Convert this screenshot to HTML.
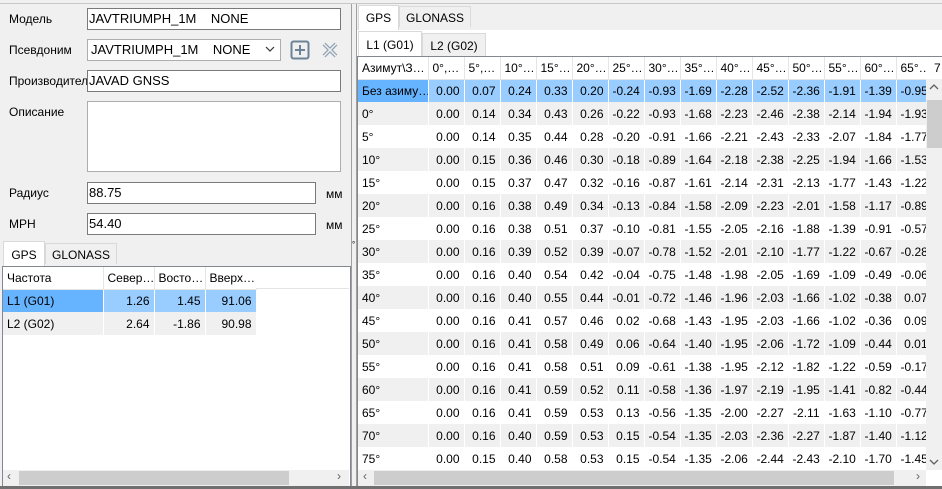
<!DOCTYPE html>
<html><head><meta charset="utf-8"><style>
*{box-sizing:border-box;margin:0;padding:0}
body{width:942px;height:489px;overflow:hidden;background:#f0f0f0;font-family:"Liberation Sans","DejaVu Sans",sans-serif;font-size:12px;color:#000;position:relative}
.a{position:absolute}
.inp{position:absolute;background:#fff;border:1px solid #7a7a7a;padding:2px 1px;font-size:13px;line-height:15px;white-space:pre}
.lbl{position:absolute;font-size:12px}
.tab{position:absolute;height:21px;border:1px solid #d9d9d9;border-bottom:none;background:#f0f0f0;text-align:center;line-height:20px}
.tab.s{background:#fff}
table{border-collapse:collapse;table-layout:fixed}
td{height:23px;padding:0 4px;white-space:nowrap;overflow:hidden;border-right:1px solid #fff;text-align:right}
td:first-child{text-align:left}
th{height:22px;font-weight:normal;text-align:left;padding:0 4px;white-space:nowrap;overflow:hidden;border-right:1px solid #e5e5e5;border-bottom:1px solid #e5e5e5;background:#fff}
tr.g td{background:#f0f0f0}
tr.w td{background:#fff}
tr.b td{background:#99ccff}
tr.b td:first-child{background:#66b3ff}
</style></head><body>
<div class="a" style="left:0;top:3px;width:942px;height:1px;background:#c8c8c8"></div>
<!-- left panel -->
<div class="lbl" style="left:9px;top:12px">Модель</div>
<div class="inp" style="left:87px;top:8px;width:254px;height:22px">JAVTRIUMPH_1M    NONE</div>
<div class="lbl" style="left:9px;top:43px">Псевдоним</div>
<div class="inp" style="left:87px;top:39px;width:194px;height:22px;border-color:#adadad;padding-left:3px">JAVTRIUMPH_1M    NONE</div>
<svg class="a" style="left:264px;top:44px" width="12" height="10"><path d="M2 3l4 4 4-4" fill="none" stroke="#333" stroke-width="1.2"/></svg>
<svg class="a" style="left:290px;top:40px" width="20" height="20"><rect x="1.5" y="1.5" width="17" height="17" rx="2" fill="none" stroke="#6c8397" stroke-width="2"/><path d="M10 5v10M5 10h10" stroke="#6c8397" stroke-width="2"/></svg>
<svg class="a" style="left:321px;top:41px" width="18" height="18"><path d="M3 3L15 15M15 3L3 15" stroke="#8fa3b4" stroke-width="4"/><path d="M3 3L15 15M15 3L3 15" stroke="#f0f0f0" stroke-width="1.5"/></svg>
<div class="lbl" style="left:9px;top:74px">Производител</div>
<div class="inp" style="left:87px;top:70px;width:254px;height:22px">JAVAD GNSS</div>
<div class="lbl" style="left:9px;top:105px">Описание</div>
<div class="inp" style="left:87px;top:101px;width:254px;height:71px;border-color:#adadad"></div>
<div class="lbl" style="left:9px;top:186px">Радиус</div>
<div class="inp" style="left:87px;top:182px;width:229px;height:22px">88.75</div>
<div class="lbl" style="left:326px;top:187px">мм</div>
<div class="lbl" style="left:9px;top:217px">МРН</div>
<div class="inp" style="left:87px;top:213px;width:229px;height:22px">54.40</div>
<div class="lbl" style="left:326px;top:218px">мм</div>

<div class="tab s" style="left:3px;top:241px;width:42px;height:25px;line-height:26px">GPS</div>
<div class="tab" style="left:45px;top:243px;width:72px;line-height:22px">GLONASS</div>
<div class="a" style="left:2px;top:266px;width:349px;height:221px;background:#fff;border:1px solid #828790"></div>
<div class="a" style="left:3px;top:267px;width:346px;height:220px;overflow:hidden">
<table style="width:253px">
<colgroup><col style="width:100px"><col style="width:51px"><col style="width:51px"><col style="width:51px"></colgroup>
<tr><th>Частота</th><th>Север…</th><th>Восто…</th><th>Вверх…</th></tr>
<tr class="b"><td>L1 (G01)</td><td>1.26</td><td>1.45</td><td>91.06</td></tr>
<tr class="g"><td>L2 (G02)</td><td>2.64</td><td>-1.86</td><td>90.98</td></tr>
</table>
<div class="a" style="left:253px;top:0;width:93px;height:22px;border-bottom:1px solid #e5e5e5;background:#fff"></div>
</div>
<div class="a" style="left:3px;top:470px;width:346px;height:16px;background:#f0f0f0"></div>
<div class="a" style="left:19px;top:471px;width:270px;height:14px;background:#cdcdcd"></div>
<div class="a" style="left:7px;top:469px;color:#606060;font-size:12px">&lsaquo;</div>
<div class="a" style="left:337px;top:469px;color:#606060;font-size:12px">&rsaquo;</div>
<div class="a" style="left:351px;top:4px;width:1px;height:485px;background:#a0a0a0"></div>
<div class="a" style="left:352px;top:240px;font-size:8px">°</div>

<!-- right panel -->
<div class="a" style="left:356px;top:4px;width:1px;height:485px;background:#a0a0a0"></div>
<div class="tab s" style="left:358px;top:5px;width:41px;height:25px;line-height:24px">GPS</div>
<div class="tab" style="left:399px;top:6px;width:72px;line-height:22px">GLONASS</div>
<div class="a" style="left:357px;top:30px;width:585px;height:459px;background:#fff"></div>
<div class="tab s" style="left:358px;top:31px;width:64px;height:26px;line-height:26px">L1 (G01)</div>
<div class="tab" style="left:422px;top:33px;width:64px;height:23px;line-height:24px;border-color:#d9d9d9">L2 (G02)</div>
<div class="a" style="left:357px;top:56px;width:585px;height:1px;background:#828790"></div>
<div class="a" style="left:357px;top:56px;width:1px;height:433px;background:#828790"></div>
<div class="a" style="left:358px;top:57px;width:569px;height:413px;overflow:hidden">
<table style="width:610px">
<colgroup><col style="width:70px"><col span="15" style="width:36px"></colgroup>
<tr><th>Азимут\З…</th><th>0°,…</th><th>5°,…</th><th>10°…</th><th>15°…</th><th>20°…</th><th>25°…</th><th>30°…</th><th>35°…</th><th>40°…</th><th>45°…</th><th>50°…</th><th>55°…</th><th>60°…</th><th>65°…</th><th>70°…</th></tr>
<tr class="b"><td>Без азиму…</td><td>0.00</td><td>0.07</td><td>0.24</td><td>0.33</td><td>0.20</td><td>-0.24</td><td>-0.93</td><td>-1.69</td><td>-2.28</td><td>-2.52</td><td>-2.36</td><td>-1.91</td><td>-1.39</td><td>-0.95</td><td></td></tr>
<tr class="g"><td>0°</td><td>0.00</td><td>0.14</td><td>0.34</td><td>0.43</td><td>0.26</td><td>-0.22</td><td>-0.93</td><td>-1.68</td><td>-2.23</td><td>-2.46</td><td>-2.38</td><td>-2.14</td><td>-1.94</td><td>-1.93</td><td></td></tr>
<tr class="w"><td>5°</td><td>0.00</td><td>0.14</td><td>0.35</td><td>0.44</td><td>0.28</td><td>-0.20</td><td>-0.91</td><td>-1.66</td><td>-2.21</td><td>-2.43</td><td>-2.33</td><td>-2.07</td><td>-1.84</td><td>-1.77</td><td></td></tr>
<tr class="g"><td>10°</td><td>0.00</td><td>0.15</td><td>0.36</td><td>0.46</td><td>0.30</td><td>-0.18</td><td>-0.89</td><td>-1.64</td><td>-2.18</td><td>-2.38</td><td>-2.25</td><td>-1.94</td><td>-1.66</td><td>-1.53</td><td></td></tr>
<tr class="w"><td>15°</td><td>0.00</td><td>0.15</td><td>0.37</td><td>0.47</td><td>0.32</td><td>-0.16</td><td>-0.87</td><td>-1.61</td><td>-2.14</td><td>-2.31</td><td>-2.13</td><td>-1.77</td><td>-1.43</td><td>-1.22</td><td></td></tr>
<tr class="g"><td>20°</td><td>0.00</td><td>0.16</td><td>0.38</td><td>0.49</td><td>0.34</td><td>-0.13</td><td>-0.84</td><td>-1.58</td><td>-2.09</td><td>-2.23</td><td>-2.01</td><td>-1.58</td><td>-1.17</td><td>-0.89</td><td></td></tr>
<tr class="w"><td>25°</td><td>0.00</td><td>0.16</td><td>0.38</td><td>0.51</td><td>0.37</td><td>-0.10</td><td>-0.81</td><td>-1.55</td><td>-2.05</td><td>-2.16</td><td>-1.88</td><td>-1.39</td><td>-0.91</td><td>-0.57</td><td></td></tr>
<tr class="g"><td>30°</td><td>0.00</td><td>0.16</td><td>0.39</td><td>0.52</td><td>0.39</td><td>-0.07</td><td>-0.78</td><td>-1.52</td><td>-2.01</td><td>-2.10</td><td>-1.77</td><td>-1.22</td><td>-0.67</td><td>-0.28</td><td></td></tr>
<tr class="w"><td>35°</td><td>0.00</td><td>0.16</td><td>0.40</td><td>0.54</td><td>0.42</td><td>-0.04</td><td>-0.75</td><td>-1.48</td><td>-1.98</td><td>-2.05</td><td>-1.69</td><td>-1.09</td><td>-0.49</td><td>-0.06</td><td></td></tr>
<tr class="g"><td>40°</td><td>0.00</td><td>0.16</td><td>0.40</td><td>0.55</td><td>0.44</td><td>-0.01</td><td>-0.72</td><td>-1.46</td><td>-1.96</td><td>-2.03</td><td>-1.66</td><td>-1.02</td><td>-0.38</td><td>0.07</td><td></td></tr>
<tr class="w"><td>45°</td><td>0.00</td><td>0.16</td><td>0.41</td><td>0.57</td><td>0.46</td><td>0.02</td><td>-0.68</td><td>-1.43</td><td>-1.95</td><td>-2.03</td><td>-1.66</td><td>-1.02</td><td>-0.36</td><td>0.09</td><td></td></tr>
<tr class="g"><td>50°</td><td>0.00</td><td>0.16</td><td>0.41</td><td>0.58</td><td>0.49</td><td>0.06</td><td>-0.64</td><td>-1.40</td><td>-1.95</td><td>-2.06</td><td>-1.72</td><td>-1.09</td><td>-0.44</td><td>0.01</td><td></td></tr>
<tr class="w"><td>55°</td><td>0.00</td><td>0.16</td><td>0.41</td><td>0.58</td><td>0.51</td><td>0.09</td><td>-0.61</td><td>-1.38</td><td>-1.95</td><td>-2.12</td><td>-1.82</td><td>-1.22</td><td>-0.59</td><td>-0.17</td><td></td></tr>
<tr class="g"><td>60°</td><td>0.00</td><td>0.16</td><td>0.41</td><td>0.59</td><td>0.52</td><td>0.11</td><td>-0.58</td><td>-1.36</td><td>-1.97</td><td>-2.19</td><td>-1.95</td><td>-1.41</td><td>-0.82</td><td>-0.44</td><td></td></tr>
<tr class="w"><td>65°</td><td>0.00</td><td>0.16</td><td>0.41</td><td>0.59</td><td>0.53</td><td>0.13</td><td>-0.56</td><td>-1.35</td><td>-2.00</td><td>-2.27</td><td>-2.11</td><td>-1.63</td><td>-1.10</td><td>-0.77</td><td></td></tr>
<tr class="g"><td>70°</td><td>0.00</td><td>0.16</td><td>0.40</td><td>0.59</td><td>0.53</td><td>0.15</td><td>-0.54</td><td>-1.35</td><td>-2.03</td><td>-2.36</td><td>-2.27</td><td>-1.87</td><td>-1.40</td><td>-1.12</td><td></td></tr>
<tr class="w"><td>75°</td><td>0.00</td><td>0.15</td><td>0.40</td><td>0.58</td><td>0.53</td><td>0.15</td><td>-0.54</td><td>-1.35</td><td>-2.06</td><td>-2.44</td><td>-2.43</td><td>-2.10</td><td>-1.70</td><td>-1.45</td><td></td></tr>
</table>
</div>
<div class="a" style="left:927px;top:57px;width:15px;height:22px;background:#fff"></div>
<div class="a" style="left:927px;top:57px;width:15px;height:22px;overflow:hidden"><span style="position:absolute;left:7px;top:4px">7</span></div>
<div class="a" style="left:926px;top:79px;width:16px;height:391px;background:#f0f0f0"></div>
<div class="a" style="left:927px;top:100px;width:15px;height:48px;background:#cdcdcd"></div>
<svg class="a" style="left:929px;top:83px" width="10" height="8"><path d="M1 6l4-4 4 4" fill="none" stroke="#606060" stroke-width="1.3"/></svg>
<svg class="a" style="left:929px;top:458px" width="10" height="8"><path d="M1 2l4 4 4-4" fill="none" stroke="#606060" stroke-width="1.3"/></svg>
<div class="a" style="left:358px;top:470px;width:568px;height:16px;background:#f0f0f0"></div>
<div class="a" style="left:374px;top:471px;width:520px;height:14px;background:#cdcdcd"></div>
<div class="a" style="left:363px;top:469px;color:#606060">&lsaquo;</div>
<div class="a" style="left:916px;top:469px;color:#606060">&rsaquo;</div>
<div class="a" style="left:0;top:486px;width:942px;height:3px;background:#707070"></div>
</body></html>
